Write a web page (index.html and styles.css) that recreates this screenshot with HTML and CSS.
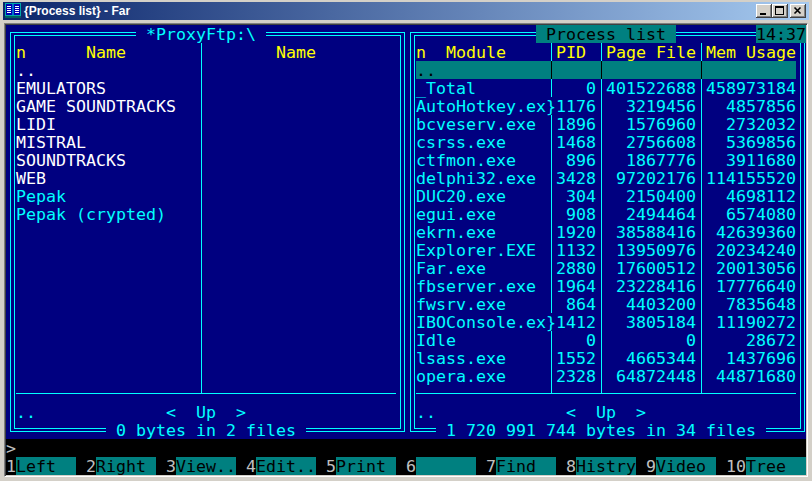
FILE: index.html
```html
<!DOCTYPE html>
<html>
<head>
<meta charset="utf-8">
<title>{Process list} - Far</title>
<link rel="stylesheet" href="styles.css">
</head>
<body>
<div class="window">
  <div class="titlebar">
    <svg class="appicon" width="16" height="16" viewBox="0 0 16 16">
      <rect x="0" y="0" width="16" height="15" fill="#00a8a8"/>
      <rect x="1" y="1" width="14" height="11" fill="#0000b0"/>
      <rect x="7.5" y="1" width="1" height="11" fill="#00e0e0"/>
      <rect x="2" y="3" width="4" height="1" fill="#fff"/>
      <rect x="2" y="5" width="4" height="1" fill="#fff"/>
      <rect x="2" y="7" width="4" height="1" fill="#fff"/>
      <rect x="2" y="9" width="4" height="1" fill="#fff"/>
      <rect x="10" y="3" width="4" height="1" fill="#fff"/>
      <rect x="10" y="5" width="4" height="1" fill="#fff"/>
      <rect x="10" y="7" width="4" height="1" fill="#fff"/>
      <rect x="10" y="9" width="4" height="1" fill="#fff"/>
      <rect x="0" y="13" width="16" height="2" fill="#006060"/>
    </svg>
    <span class="title">{Process list} - Far</span>
    <div class="buttons">
      <span class="btn"><svg width="16" height="14" viewBox="0 0 16 14"><rect x="4" y="9" width="6" height="2" fill="#000"/></svg></span>
      <span class="btn"><svg width="16" height="14" viewBox="0 0 16 14"><rect x="3.5" y="2.5" width="8" height="8" fill="none" stroke="#000"/><rect x="3" y="2" width="9" height="2" fill="#000"/></svg></span>
      <span class="btn close"><svg width="16" height="14" viewBox="0 0 16 14"><path d="M4.5 3.5l6 6M10.5 3.5l-6 6" stroke="#000" stroke-width="1.6" fill="none"/></svg></span>
    </div>
  </div>
  <div class="client">
    <div class="console">
      <div class="panel pl">
        <div class="frame"><div class="frame-in"></div></div>
        <div class="vsep l-sep"></div>
        <div class="hsep"></div>
        <div class="ptitle l-title"> *ProxyFtp:\ </div>
        <div class="hdr l-hn">n</div>
        <div class="hdr l-h1">Name</div>
        <div class="hdr l-h2">Name</div>
        <div class="files">
          <div class="dir">..</div>
          <div class="dir">EMULATORS</div>
          <div class="dir">GAME SOUNDTRACKS</div>
          <div class="dir">LIDI</div>
          <div class="dir">MISTRAL</div>
          <div class="dir">SOUNDTRACKS</div>
          <div class="dir">WEB</div>
          <div class="file">Pepak</div>
          <div class="file">Pepak (crypted)</div>
        </div>
        <div class="info">..             &lt;  Up  &gt;</div>
        <div class="btitle l-btitle"> 0 bytes in 2 files </div>
      </div>
      <div class="panel pr">
        <div class="frame"><div class="frame-in"></div></div>
        <div class="cursor">..</div>
        <div class="vsep r-sep1"></div>
        <div class="vsep r-sep2"></div>
        <div class="vsep r-sep3"></div>
        <div class="hsep"></div>
        <div class="ptitle r-title"> Process list </div>
        <div class="hdr r-hn">n</div>
        <div class="hdr r-h1">Module</div>
        <div class="hdr r-h2">PID</div>
        <div class="hdr r-h3">Page File</div>
        <div class="hdr r-h4">Mem Usage</div>
        <div class="procs">
          <div class="proc"><span>_Total</span><span></span><span class="num">0</span><span class="num">401522688</span><span class="num">458973184</span></div>
          <div class="proc"><span>AutoHotkey.ex</span><span class="mark">}</span><span class="num">1176</span><span class="num">3219456</span><span class="num">4857856</span></div>
          <div class="proc"><span>bcveserv.exe</span><span></span><span class="num">1896</span><span class="num">1576960</span><span class="num">2732032</span></div>
          <div class="proc"><span>csrss.exe</span><span></span><span class="num">1468</span><span class="num">2756608</span><span class="num">5369856</span></div>
          <div class="proc"><span>ctfmon.exe</span><span></span><span class="num">896</span><span class="num">1867776</span><span class="num">3911680</span></div>
          <div class="proc"><span>delphi32.exe</span><span></span><span class="num">3428</span><span class="num">97202176</span><span class="num">114155520</span></div>
          <div class="proc"><span>DUC20.exe</span><span></span><span class="num">304</span><span class="num">2150400</span><span class="num">4698112</span></div>
          <div class="proc"><span>egui.exe</span><span></span><span class="num">908</span><span class="num">2494464</span><span class="num">6574080</span></div>
          <div class="proc"><span>ekrn.exe</span><span></span><span class="num">1920</span><span class="num">38588416</span><span class="num">42639360</span></div>
          <div class="proc"><span>Explorer.EXE</span><span></span><span class="num">1132</span><span class="num">13950976</span><span class="num">20234240</span></div>
          <div class="proc"><span>Far.exe</span><span></span><span class="num">2880</span><span class="num">17600512</span><span class="num">20013056</span></div>
          <div class="proc"><span>fbserver.exe</span><span></span><span class="num">1964</span><span class="num">23228416</span><span class="num">17776640</span></div>
          <div class="proc"><span>fwsrv.exe</span><span></span><span class="num">864</span><span class="num">4403200</span><span class="num">7835648</span></div>
          <div class="proc"><span>IBOConsole.ex</span><span class="mark">}</span><span class="num">1412</span><span class="num">3805184</span><span class="num">11190272</span></div>
          <div class="proc"><span>Idle</span><span></span><span class="num">0</span><span class="num">0</span><span class="num">28672</span></div>
          <div class="proc"><span>lsass.exe</span><span></span><span class="num">1552</span><span class="num">4665344</span><span class="num">1437696</span></div>
          <div class="proc"><span>opera.exe</span><span></span><span class="num">2328</span><span class="num">64872448</span><span class="num">44871680</span></div>
        </div>
        <div class="info">..             &lt;  Up  &gt;</div>
        <div class="btitle r-btitle"> 1 720 991 744 bytes in 34 files </div>
      </div>
      <div class="clock">14:37</div>
      <div class="cmdline">&gt;</div>
      <div class="keybar">
        <span class="key"><span class="kn">1</span><span class="kl">Left</span></span>
        <span class="key"><span class="kn">2</span><span class="kl">Right</span></span>
        <span class="key"><span class="kn">3</span><span class="kl">View..</span></span>
        <span class="key"><span class="kn">4</span><span class="kl">Edit..</span></span>
        <span class="key"><span class="kn">5</span><span class="kl">Print</span></span>
        <span class="key"><span class="kn">6</span><span class="kl"></span></span>
        <span class="key"><span class="kn">7</span><span class="kl">Find</span></span>
        <span class="key"><span class="kn">8</span><span class="kl">Histry</span></span>
        <span class="key"><span class="kn">9</span><span class="kl">Video</span></span>
        <span class="key last"><span class="kn">10</span><span class="kl">Tree</span></span>
      </div>
    </div>
  </div>
</div>
</body>
</html>
```

FILE: styles.css
```css
* { box-sizing: border-box; }
html, body { margin: 0; padding: 0; }
body { width: 812px; height: 481px; overflow: hidden; background: #d4d0c8; }

.window {
  width: 812px; height: 481px;
  background: #d4d0c8;
  padding: 2px 4px 4px 4px;
  display: flex; flex-direction: column;
}

.titlebar {
  height: 18px;
  margin: 0 -1px;
  background: linear-gradient(to right, #0a246a, #a6caf0);
  display: flex; align-items: center;
  padding: 0 3px 0 2px;
  flex: none;
}
.appicon { flex: none; display: block; }
.title {
  flex: 1;
  margin-left: 3px;
  color: #fff;
  font-family: "Liberation Sans", Arial, sans-serif;
  font-weight: bold;
  font-size: 12px;
  line-height: 16px;
  white-space: nowrap;
}
.buttons { display: flex; }
.btn {
  width: 16px; height: 14px;
  background: #d4d0c8;
  box-shadow: inset -1px -1px #404040, inset 1px 1px #ffffff, inset -2px -2px #808080, inset 2px 2px #d4d0c8;
  display: block;
}
.btn svg { display: block; }
.btn.close { margin-left: 2px; }

.client {
  margin-top: 3px;
  border: 1px solid;
  border-color: #808080 #ffffff #ffffff #808080;
  padding: 1px;
  box-shadow: inset 1px 1px #404040, inset -1px -1px #d4d0c8;
  flex: none;
}

.console {
  width: 800px; height: 450px;
  display: grid;
  grid-template-columns: repeat(80, 10px);
  grid-template-rows: repeat(25, 18px);
  background: #000;
  font-family: "DejaVu Sans Mono", "Liberation Mono", monospace;
  font-size: 16.61px;
  line-height: 18px;
  color: #0ff;
}

.panel {
  grid-row: 1 / 24;
  display: grid;
  grid-template-columns: repeat(40, 10px);
  grid-template-rows: repeat(23, 18px);
  background: #000080;
}
.pl { grid-column: 1 / 41; }
.pr { grid-column: 41 / 81; }

.frame {
  grid-row: 1 / 24; grid-column: 1 / 41;
  margin: 7px 1px 7px 4px;
  border: 1px solid #0ff;
  padding: 2px 3px;
}
.frame-in { height: 100%; border: 1px solid #0ff; }

.vsep {
  grid-row: 2 / 22;
  width: 1px;
  margin-left: 5px;
  margin-bottom: 9px;
  background: #0ff;
}
.l-sep { grid-column: 20; }
.r-sep1 { grid-column: 15; }
.r-sep2 { grid-column: 20; }
.r-sep3 { grid-column: 30; }
.r-sep1, .r-sep2, .r-sep3 {
  background: linear-gradient(#0ff 0 18px, #000 18px 36px, #0ff 36px);
}

.hsep {
  grid-row: 21; grid-column: 2 / 40;
  height: 1px; margin-top: 8px;
  background: #0ff;
}

/* text cells: 18px rows, glyphs nudged down to sit like the raster font */
.ptitle, .hdr, .files div, .cursor, .proc span, .info, .btitle, .clock, .cmdline, .kn, .kl {
  white-space: pre;
  height: 18px;
  padding-top: 2px;
  line-height: 16px;
}

.ptitle { grid-row: 1; background: #000080; color: #0ff; }
.l-title { grid-column: 14 / 27; }
.r-title { grid-column: 14 / 28; background: #008080; color: #000; }

.hdr { grid-row: 2; color: #ff0; }
.l-hn { grid-column: 2; }
.l-h1 { grid-column: 9 / 13; }
.l-h2 { grid-column: 28 / 32; }
.r-hn { grid-column: 2; }
.r-h1 { grid-column: 5 / 11; }
.r-h2 { grid-column: 16 / 19; }
.r-h3 { grid-column: 21 / 30; }
.r-h4 { grid-column: 31 / 40; }

.files { grid-row: 3 / 21; grid-column: 2 / 20; }
.dir { color: #fff; }
.file { color: #0ff; }

.cursor { grid-row: 3; grid-column: 2 / 40; background: #008080; color: #000; }

.procs { grid-row: 4 / 21; grid-column: 2 / 40; }
.proc {
  height: 18px;
  display: grid;
  grid-template-columns: 130px 10px 40px 100px 100px;
  color: #0ff;
}
.proc .num { text-align: right; }
.proc .mark { background: #000080; }

.info { grid-row: 22; grid-column: 2 / 40; color: #0ff; }

.btitle { grid-row: 23; background: #000080; color: #0ff; }
.l-btitle { grid-column: 11 / 31; }
.r-btitle { grid-column: 4 / 37; }

.clock { grid-row: 1; grid-column: 76 / 81; background: #008080; color: #000; }

.cmdline { grid-row: 24; grid-column: 1 / 81; color: #c0c0c0; }

.keybar { grid-row: 25; grid-column: 1 / 81; display: flex; height: 18px; }
.key { display: flex; margin-right: 10px; height: 18px; }
.key.last { margin-right: 0; }
.kn { color: #c0c0c0; }
.kl { width: 60px; background: #008080; color: #000; }
```
